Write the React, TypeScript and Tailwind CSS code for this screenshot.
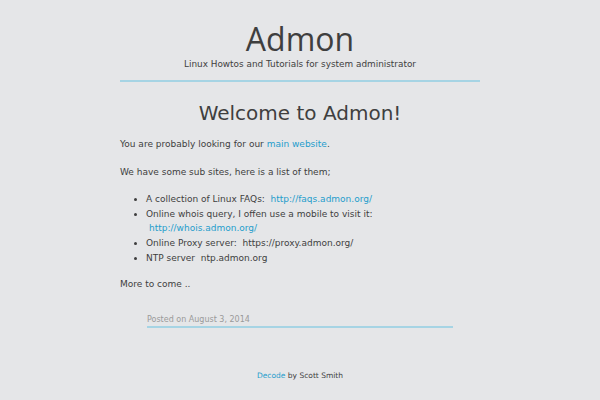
export default function App() {
  const link = 'text-[#1f9dcc]';
  return (
    <div className="min-h-[400px] bg-[#e5e6e8] text-[#3e3e3e] font-['DejaVu_Sans',sans-serif]">
      <div className="w-[360px] mx-auto pt-[19px]">
        <header className="text-center">
          <div className="font-['Open_Sans',sans-serif] text-[32px] leading-[40px] text-[#3f3f3f]">Admon</div>
          <div className="text-[8.9px] leading-[12px] mt-[-1px]">Linux Howtos and Tutorials for system administrator</div>
          <div className="mt-[10px] h-[2px] bg-[#a6d4e4]" />
        </header>

        <article className="mt-[19px] text-[9px] leading-[14.7px]">
          <h1 className="text-center text-[20px] leading-[24px] text-[#3f3f3f]">Welcome to Admon!</h1>
          <p className="mt-[12px]">
            You are probably looking for our <span className={link}>main website</span>.
          </p>
          <p className="mt-[13px]">We have some sub sites, here is a list of them;</p>
          <ul className="mt-[12.5px] pl-[26px] list-disc">
            <li>
              A collection of Linux FAQs:&nbsp; <span className={link}>http://faqs.admon.org/</span>
            </li>
            <li>
              Online whois query, I offen use a mobile to visit it:
              <br />
              <span className={`${link} pl-[3px]`}>http://whois.admon.org/</span>
            </li>
            <li>Online Proxy server:&nbsp; https://proxy.admon.org/</li>
            <li>NTP server&nbsp; ntp.admon.org</li>
          </ul>
          <p className="mt-[12px]">More to come ..</p>
          <div className="mx-[27px] mt-[22px] text-[8px] leading-[12px] text-[#9a9a9a] border-b-2 border-[#a6d4e4]">
            Posted on August 3, 2014
          </div>
        </article>

        <footer className="mt-[42px] text-center text-[7.5px]">
          <span className={link}>Decode</span> by Scott Smith
        </footer>
      </div>
    </div>
  );
}
